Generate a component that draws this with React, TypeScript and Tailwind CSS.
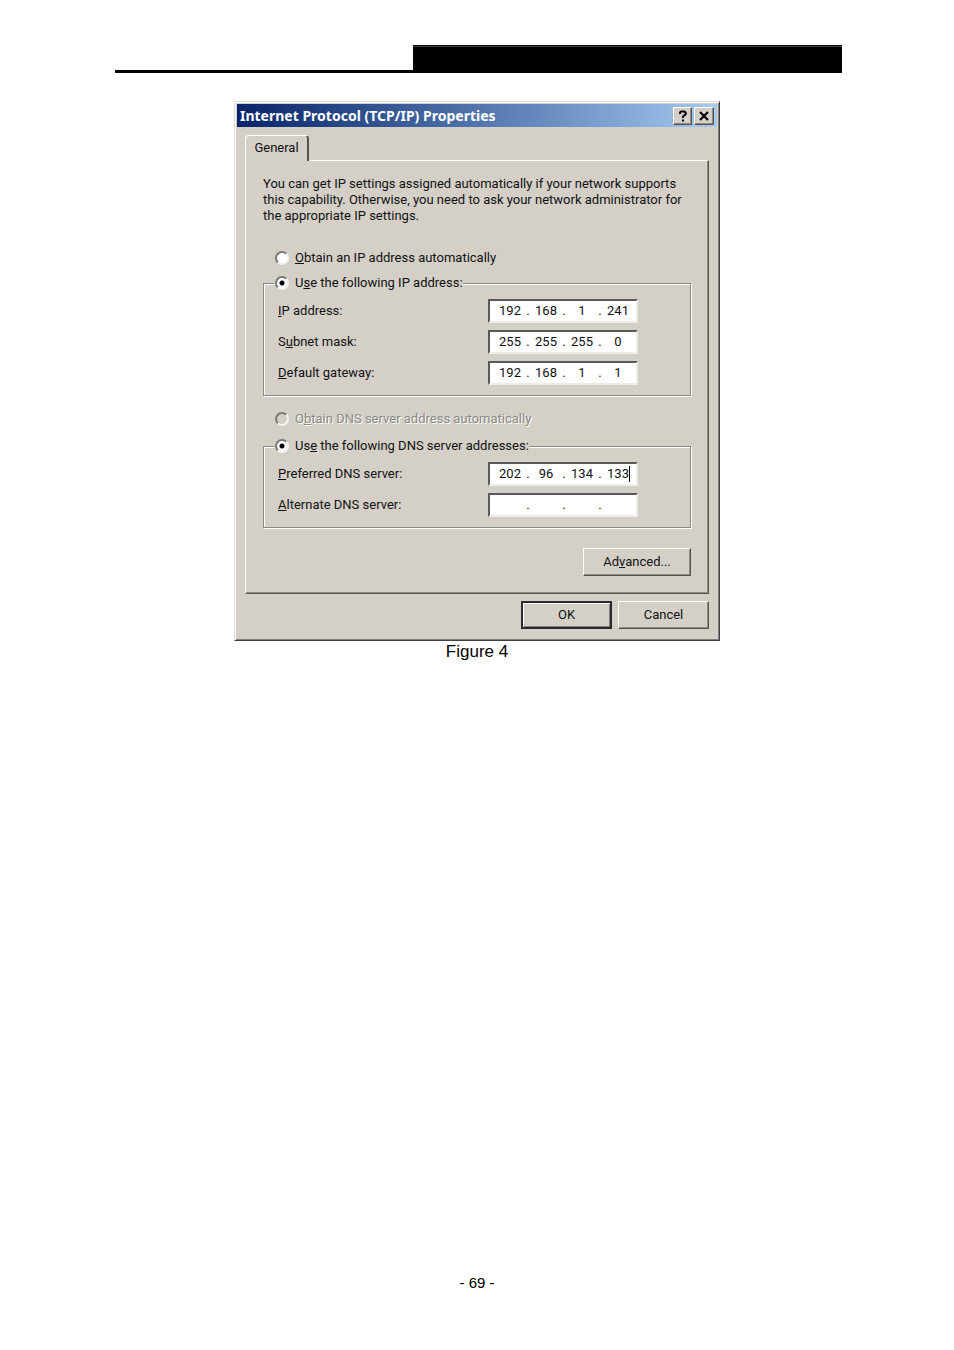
import type { ReactNode } from "react";

type Octets = [string, string, string, string];

const raised =
  "bg-[#d4d0c8] border border-t-white border-l-white border-r-[#55534f] border-b-[#55534f] shadow-[inset_-1px_-1px_0_#8f8c86]";

const buttonSize = "h-7 flex items-center justify-center";

const Radio = ({
  id,
  name,
  checked,
  disabled,
  children,
}: {
  id: string;
  name: string;
  checked?: boolean;
  disabled?: boolean;
  children: ReactNode;
}) => (
  <div className="flex items-center gap-1.5 h-4">
    <input
      type="radio"
      id={id}
      name={name}
      defaultChecked={checked}
      disabled={disabled}
      className="appearance-none shrink-0 size-3.5 rounded-full border-2 border-t-[#7b7976] border-l-[#7b7976] border-r-[#f4f2ee] border-b-[#f4f2ee] bg-white checked:bg-[radial-gradient(circle,#000_2px,#fff_3px)] disabled:bg-[#d4d0c8]"
    />
    <label
      htmlFor={id}
      className={disabled ? "text-[#8b8984] [text-shadow:1px_1px_0_#fff]" : ""}
    >
      {children}
    </label>
  </div>
);

const IpField = ({
  id,
  name,
  value,
  caret,
  children,
}: {
  id: string;
  name: string;
  value: Octets;
  caret?: boolean;
  children: ReactNode;
}) => (
  <div className="flex items-center justify-between">
    <label htmlFor={id}>{children}</label>
    <div className="relative flex items-center w-[150px] h-6 pl-[5px] pr-[3px] bg-white border-2 border-t-[#5c5a58] border-l-[#5c5a58] border-r-[#eeece8] border-b-[#eeece8]">
      {value.map((octet, index) => (
        <div key={index} className="contents">
          {index > 0 && <span className="w-1.5 text-center">.</span>}
          <input
            id={index === 0 ? id : undefined}
            aria-label={index === 0 ? undefined : `${name} part ${index + 1}`}
            defaultValue={octet}
            className="flex-1 min-w-0 h-4 text-center bg-transparent outline-none"
          />
        </div>
      ))}
      {caret && <span className="absolute right-1.5 top-0.5 w-px h-4 bg-black" />}
    </div>
  </div>
);

const Group = ({ legend, children }: { legend: ReactNode; children: ReactNode }) => (
  <fieldset className="border border-[#8a8882] shadow-[1px_1px_0_#fff,inset_1px_1px_0_#fff] pl-3.5 pr-[52px] pb-2.5">
    <legend className="relative -ml-1 pl-px bg-[#d4d0c8]">{legend}</legend>
    <div className="flex flex-col gap-[7px] pt-2">{children}</div>
  </fieldset>
);

const PropertiesDialog = () => (
  <section className="w-full max-w-[486px] p-0.5 pb-[11px] bg-[#d4d0c8] border border-t-[#dedbd2] border-l-[#dedbd2] border-r-[#404040] border-b-[#404040] shadow-[inset_1px_1px_0_#fff,inset_-1px_-1px_0_#808080] font-['Roboto',sans-serif] text-[13px] leading-4 text-[#111]">
    <header className="flex items-center justify-between h-[23px] px-[3px] bg-linear-to-r from-[#0a246a] to-[#a6caf0]">
      <h1 className="font-['Noto_Sans',sans-serif] font-bold text-sm leading-4 text-white">
        Internet Protocol (TCP/IP) Properties
      </h1>
      <div className="flex gap-0.5">
        <button aria-label="Help" className={`${raised} w-[19px] h-[18px] flex items-center justify-center`}>
          <svg viewBox="0 0 10 12" className="w-2.5 h-3" fill="none" stroke="#000" strokeWidth="2">
            <path d="M2 4V2.5L3.2 1.5H6.5L7.7 2.7V4.2L5 6.5V8M5 9.5V11.5" />
          </svg>
        </button>
        <button aria-label="Close" className={`${raised} w-5 h-[18px] flex items-center justify-center`}>
          <svg viewBox="0 0 10 10" className="size-2.5" stroke="#000" strokeWidth="2">
            <path d="M1 1L9 9M9 1L1 9" />
          </svg>
        </button>
      </div>
    </header>

    <div className="px-2 pt-2">
      {/* Tab strip */}
      <div role="tablist" className="flex">
        <button
          role="tab"
          aria-selected="true"
          className="relative -mb-px w-16 h-[26px] pb-0.5 rounded-t-sm bg-[#d4d0c8] border-t border-l border-r-2 border-t-white border-l-white border-r-[#55534f]"
        >
          General
        </button>
      </div>

      <div className="border border-t-white border-l-white border-r-[#55534f] border-b-[#55534f] shadow-[inset_-1px_-1px_0_#8f8c86] px-[17px] pt-[15px] pb-[17px]">
        <p>
          You can get IP settings assigned automatically if your network supports
          <br />
          this capability. Otherwise, you need to ask your network administrator for
          <br />
          the appropriate IP settings.
        </p>

        <div className="pl-3 pt-[26px] pb-[9px]">
          <Radio id="ip-auto" name="ip">
            <u>O</u>btain an IP address automatically
          </Radio>
        </div>
        <Group
          legend={
            <Radio id="ip-manual" name="ip" checked>
              U<u>s</u>e the following IP address:
            </Radio>
          }
        >
          <IpField id="ip-address" name="IP address" value={["192", "168", "1", "241"]}>
            <u>I</u>P address:
          </IpField>
          <IpField id="subnet" name="Subnet mask" value={["255", "255", "255", "0"]}>
            S<u>u</u>bnet mask:
          </IpField>
          <IpField id="gateway" name="Default gateway" value={["192", "168", "1", "1"]}>
            <u>D</u>efault gateway:
          </IpField>
        </Group>

        <div className="pl-3 pt-[15px] pb-[11px]">
          <Radio id="dns-auto" name="dns" disabled>
            O<u>b</u>tain DNS server address automatically
          </Radio>
        </div>
        <Group
          legend={
            <Radio id="dns-manual" name="dns" checked>
              Us<u>e</u> the following DNS server addresses:
            </Radio>
          }
        >
          <IpField id="dns-1" name="Preferred DNS server" value={["202", "96", "134", "133"]} caret>
            <u>P</u>referred DNS server:
          </IpField>
          <IpField id="dns-2" name="Alternate DNS server" value={["", "", "", ""]}>
            <u>A</u>lternate DNS server:
          </IpField>
        </Group>

        <div className="flex justify-end pt-5">
          <button className={`${raised} ${buttonSize} w-[108px]`}>
            <span>
              Ad<u>v</u>anced...
            </span>
          </button>
        </div>
      </div>

      <div className="flex justify-end gap-1.5 pt-[7px]">
        <button className={`${buttonSize} w-[91px] bg-[#d4d0c8] border-2 border-[#2b2a29] shadow-[inset_1px_1px_0_#fff,inset_-1px_-1px_0_#808080]`}>
          OK
        </button>
        <button className={`${raised} ${buttonSize} w-[91px]`}>Cancel</button>
      </div>
    </div>
  </section>
);

const App = () => {
  return (
    <div className="min-h-screen flex flex-col bg-white text-black font-['Liberation_Sans',sans-serif]">
      <div className="pt-[45px] pl-[115px] pr-28">
        <div className="flex justify-end border-b-[3px] border-black">
          <div className="w-[59%] h-[25px] bg-black border-t border-black shadow-[inset_0_1px_0_#444]" />
        </div>
      </div>

      <main className="flex flex-col items-center pt-7">
        <PropertiesDialog />
        <p className="text-[17px] leading-[22px]">Figure 4</p>
      </main>

      <footer className="mt-auto pb-[57px] text-center text-[15px] leading-5">- 69 -</footer>
    </div>
  );
};

export default App;
